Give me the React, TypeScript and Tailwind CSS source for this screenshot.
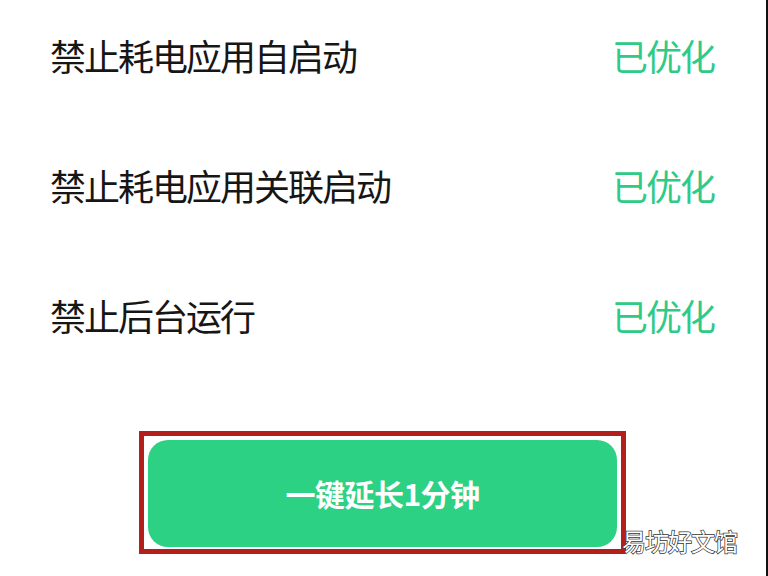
import React from "react";

const rows = ["禁止耗电应用自启动", "禁止耗电应用关联启动", "禁止后台运行"];

export default function App() {
  return (
    <div
      className="relative w-[768px] h-[576px] overflow-hidden bg-white border-r-2 border-[#111]"
      style={{ fontFamily: '"Noto Sans CJK SC", "Noto Sans", sans-serif' }}
    >
      <div className="flex flex-col gap-[96px] pt-[38px] pl-[50px] pr-[52px]">
        {rows.map((label) => (
          <div key={label} className="flex items-center justify-between leading-[34px]">
            <span className="text-[36px] tracking-[-2px] text-[#161616]">{label}</span>
            <span className="text-[36px] tracking-[-2px] text-[#2fca85]">已优化</span>
          </div>
        ))}
      </div>

      <div className="mt-[99px] ml-[139px] w-[487px] h-[123px] border-[5px] border-[#b3201c] pt-[4px] pl-[4px] pr-[4px] pb-[2px]">
        <button className="w-full h-full rounded-[20px] bg-[#2dd184] text-white text-[30px] font-bold tracking-[-0.5px] flex items-center justify-center">
          一键延长1分钟
        </button>
      </div>

      <div className="absolute left-[622px] top-[526px] text-[24px] leading-[30px] text-white tracking-[-1px] [-webkit-text-stroke:1.5px_#333] [paint-order:stroke_fill]">
        易坊好文馆
      </div>
    </div>
  );
}
